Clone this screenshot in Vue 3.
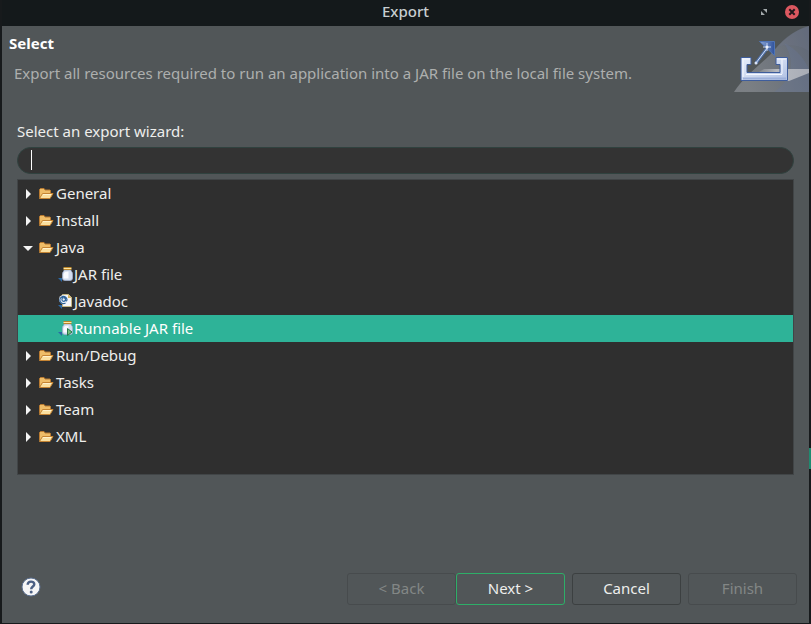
<script setup>
import { ref } from 'vue'

const filter = ref('')
const selected = ref('Runnable JAR file')
const nodes = ref([
  { name: 'General', open: false, items: [] },
  { name: 'Install', open: false, items: [] },
  {
    name: 'Java',
    open: true,
    items: [
      { name: 'JAR file', icon: 'jar' },
      { name: 'Javadoc', icon: 'doc' },
      { name: 'Runnable JAR file', icon: 'run' },
    ],
  },
  { name: 'Run/Debug', open: false, items: [] },
  { name: 'Tasks', open: false, items: [] },
  { name: 'Team', open: false, items: [] },
  { name: 'XML', open: false, items: [] },
])
</script>

<template>
  <div class="window">
    <header class="titlebar">
      <h1>Export</h1>
      <div class="window-actions">
        <button type="button" class="window-button" aria-label="Maximize">
          <svg width="8" height="8" viewBox="0 0 8 8" fill="#a3a9ab">
            <path d="M3 1h4v4zM1 3l4 4H1z" />
          </svg>
        </button>
        <button type="button" class="window-button" aria-label="Close">
          <svg width="14" height="14" viewBox="0 0 14 14">
            <circle cx="7" cy="7" r="7" fill="#dc5860" />
            <path d="M4.300 4.300l5.400 5.400M9.700 4.300L4.300 9.700" stroke="#20191d" stroke-width="2" />
          </svg>
        </button>
      </div>
    </header>

    <main class="dialog">
      <section class="banner">
        <div class="banner-text">
          <h2>Select</h2>
          <p>Export all resources required to run an application into a JAR file on the local file system.</p>
        </div>
        <svg class="banner-art" width="75" height="66" viewBox="0 0 75 66" aria-hidden="true">
          <defs>
            <linearGradient id="haze" x1="0" y1="0.3" x2="1" y2="0">
              <stop offset="0" stop-color="#92969c" />
              <stop offset="0.55" stop-color="#7b828e" />
              <stop offset="1" stop-color="#667087" />
            </linearGradient>
            <linearGradient id="beam" x1="0" y1="0" x2="1" y2="0">
              <stop offset="0" stop-color="#80858d" stop-opacity="0" />
              <stop offset="0.5" stop-color="#c3c5ca" />
              <stop offset="1" stop-color="#b4b7bf" />
            </linearGradient>
            <linearGradient id="tray" x1="0" y1="0" x2="1" y2="1">
              <stop offset="0" stop-color="#e4ecfa" />
              <stop offset="0.5" stop-color="#cfdaf0" />
              <stop offset="1" stop-color="#aebfe2" />
            </linearGradient>
            <linearGradient id="head" x1="0" y1="0" x2="1" y2="0">
              <stop offset="0" stop-color="#8fa9d6" />
              <stop offset="1" stop-color="#2f529c" />
            </linearGradient>
          </defs>
          <path d="M75 0C60 4 47 15 36 29C23 41 9 52 0 66H75z" fill="url(#haze)" opacity=".65" />
          <path d="M75 0C61 4 51 11 43 21C54 17 65 19 75 25z" fill="#6d7589" opacity=".3" />
          <path d="M50 17C61 22 70 32 75 43V66H40C58 54 62 36 50 17z" fill="#68769a" opacity=".3" />
          <path d="M30 43H75V47L55 55H10z" fill="url(#beam)" opacity=".85" />
          <path d="M7 31.500h10v7h-4v8h33v-8h-4v-7h11.500v23H7z" fill="url(#tray)" stroke="#3e5d9c" />
          <path d="M9 52.500h43" stroke="#9db0da" stroke-width="2" />
          <path d="M8 33h8M43 33h9M9 33v18M12 48.500h36M48 33v15" stroke="#f5f8ff" fill="none" />
          <path d="M25.500 15.500h15v14z" fill="url(#head)" stroke="#4f74b5" />
          <path d="M22 37L34 21" stroke="#4f70a9" stroke-width="3" />
          <path d="M22 37L34 21" stroke="#d8e3f7" />
          <path d="M33 17v8M29 21h8" stroke="#c3d3ee" />
          <circle cx="33" cy="21" r="1.500" fill="#eef3fc" />
          <circle cx="22" cy="37" r="1.500" fill="#d8e3f7" />
        </svg>
      </section>

      <section class="chooser">
        <label for="wizard-filter">Select an export wizard:</label>
        <div class="search">
          <input id="wizard-filter" v-model="filter" type="text" autocomplete="off" />
          <span v-if="!filter" class="caret"></span>
        </div>

        <ul class="tree" role="tree" aria-label="Export wizards">
          <li v-for="node in nodes" :key="node.name" role="treeitem" :aria-expanded="node.open">
            <button type="button" class="row" @click="node.open = !node.open">
              <svg class="arrow" width="10" height="12" viewBox="0 0 10 12" fill="#f4f4f4">
                <path v-if="node.open" d="M0 4h10L5 9z" />
                <path v-else d="M3 1l5 5-5 5z" />
              </svg>
              <svg class="folder" width="16" height="14" viewBox="0 0 16 14">
                <path d="M1.500 10.500V2.500l1-1h3.500l1 1.500h5l.5.500V6" fill="#efbd68" stroke="#b97a30" />
                <path d="M1.500 11.500L4.500 6.500H15L12 11.500z" fill="#fbe0a0" stroke="#c58433" />
                <path d="M5 7.500h8" stroke="#fff2cc" />
              </svg>
              <span class="name">{{ node.name }}</span>
            </button>
            <ul v-if="node.open && node.items.length" role="group">
              <li v-for="item in node.items" :key="item.name" role="treeitem" :aria-selected="selected === item.name">
                <button
                  type="button"
                  class="row child"
                  :class="{ active: selected === item.name }"
                  @click="selected = item.name"
                >
                  <svg width="16" height="16" viewBox="0 0 16 16">
                    <path d="M0 11h4v4z" fill="#2b68a5" />
                    <g v-if="item.icon === 'doc'">
                      <path d="M4.500 .5h6l3 3v9h-9z" fill="#f5f6fb" stroke="#c5b682" />
                      <path d="M10 .5V4h3.500z" fill="#d8b35c" />
                      <circle cx="5.500" cy="5.500" r="4.500" fill="#e8f0f8" />
                      <path d="M7.500 3.500V6.500q1.500 1 1.500-1A3.600 3.600 0 1 0 7.500 9M7.500 5.500a1.800 1.800 0 1 1-3.600 0a1.800 1.800 0 0 1 3.600 0" fill="none" stroke="#31659c" stroke-width="1.200" />
                    </g>
                    <g v-else>
                      <path d="M6 3h7v1q1.500 1 1.500 3V11q0 2.500-2.500 2.500H7Q4.500 13.500 4.500 11V7q0-2 1.500-3z" fill="#d3ddef" stroke="#9fafcc" stroke-width=".8" />
                      <path d="M7 5q-1.500 1-1.500 2.500v4h5V4.500z" fill="#f8faff" />
                      <path d="M5.500 0h8v1h-8zM5.500 2h8v1h-8z" fill="#b9852a" />
                      <path d="M5.500 1h8v1h-8z" fill="#ffe6a0" />
                      <path v-if="item.icon === 'run'" d="M9.500 7.500L14 11l-4.500 3.500z" fill="#70bd7b" stroke="#27774b" />
                    </g>
                  </svg>
                  <span class="name">{{ item.name }}</span>
                </button>
              </li>
            </ul>
          </li>
        </ul>
      </section>

      <footer class="footer">
        <button type="button" class="help" aria-label="Help">
          <svg width="20" height="20" viewBox="0 0 20 20">
            <circle cx="10" cy="10" r="9" fill="#f5f5f6" stroke="#5c7193" />
            <path d="M6.700 7.700C6.700 3.700 13.300 3.700 13.300 7.300C13.300 9.600 10.200 9.500 10.200 12.200" fill="none" stroke="#4b5f84" stroke-width="2.400" />
            <circle cx="10.200" cy="15" r="1.500" fill="#4b5f84" />
          </svg>
        </button>
        <div class="actions">
          <div class="pager">
            <button type="button" class="action" disabled>&lt; Back</button>
            <button type="button" class="action primary">Next &gt;</button>
          </div>
          <button type="button" class="action">Cancel</button>
          <button type="button" class="action" disabled>Finish</button>
        </div>
      </footer>
    </main>
  </div>
</template>

<style>
body {
  margin: 0;
  background: #171a1c;
}
</style>

<style scoped>
.window {
  box-sizing: border-box;
  display: flex;
  flex-direction: column;
  min-height: 100vh;
  padding: 0 2px 1px;
  background: linear-gradient(#1f8a70, #1f8a70) right 0 top 448px / 2px 21px no-repeat #171a1c;
  color: #eeeeec;
  font-family: "Noto Sans", sans-serif;
  font-size: 15px;
  line-height: 20px;
}

h1,
h2,
p,
ul {
  margin: 0;
  padding: 0;
}

ul {
  list-style: none;
}

button,
input {
  font: inherit;
  color: inherit;
}

svg {
  display: block;
  flex: none;
}

.titlebar {
  display: grid;
  grid-template-columns: 1fr auto 1fr;
  align-items: center;
  height: 26px;
  padding: 0 10px;
  background: #14191b;
}

.titlebar h1 {
  grid-column: 2;
  padding-bottom: 4px;
  font-size: 15px;
  font-weight: 500;
  color: #c7ced1;
}

.window-actions {
  display: flex;
  justify-content: flex-end;
  align-items: center;
  gap: 17px;
  padding-bottom: 2px;
}

.window-button,
.help {
  padding: 0;
  border: 0;
  background: none;
}

.dialog {
  display: flex;
  flex: 1;
  flex-direction: column;
  background: #515658;
}

.banner {
  display: flex;
  justify-content: space-between;
}

.banner-text {
  padding: 7px 0 0 7px;
}

.banner h2 {
  font-size: 15px;
  font-weight: 700;
  color: #fff;
}

.banner p {
  padding: 10px 0 0 5px;
  color: #adafae;
}

.chooser {
  display: flex;
  flex-direction: column;
  padding: 29px 15px 0;
}

.search {
  position: relative;
  margin: 6px 0 5px;
}

.search input {
  box-sizing: border-box;
  display: block;
  width: 100%;
  height: 27px;
  padding: 0 14px;
  border: 1px solid #30423f;
  border-radius: 14px;
  outline: none;
  background: #333;
}

.caret {
  position: absolute;
  top: 3px;
  left: 14px;
  width: 1px;
  height: 20px;
  background: #fff;
}

.search:focus-within .caret {
  display: none;
}

.tree {
  min-height: 294px;
  border: 1px solid #414547;
  background: #2f2f2f;
}

.row {
  display: flex;
  align-items: center;
  width: 100%;
  height: 27px;
  padding: 0 5px;
  border: 0;
  background: none;
  text-align: left;
}

.name {
  padding-bottom: 2px;
}

.folder {
  margin: 0 2px 0 5px;
}

.child {
  padding-left: 40px;
}

.active {
  background: #2eb398;
  color: #fff;
}

.footer {
  display: flex;
  align-items: center;
  justify-content: space-between;
  margin-top: auto;
  padding: 0 12px 18px 19px;
}

.help {
  padding-bottom: 4px;
}

.actions {
  display: flex;
  gap: 7px;
}

.pager {
  display: flex;
}

.action {
  width: 109px;
  height: 32px;
  padding: 0 0 2px;
  border: 1px solid #3c4041;
  border-radius: 3px;
  background: #515658;
}

.action.primary {
  border-color: #2eae68;
}

.action:disabled {
  border-color: #474b4d;
  color: #838786;
}
</style>
